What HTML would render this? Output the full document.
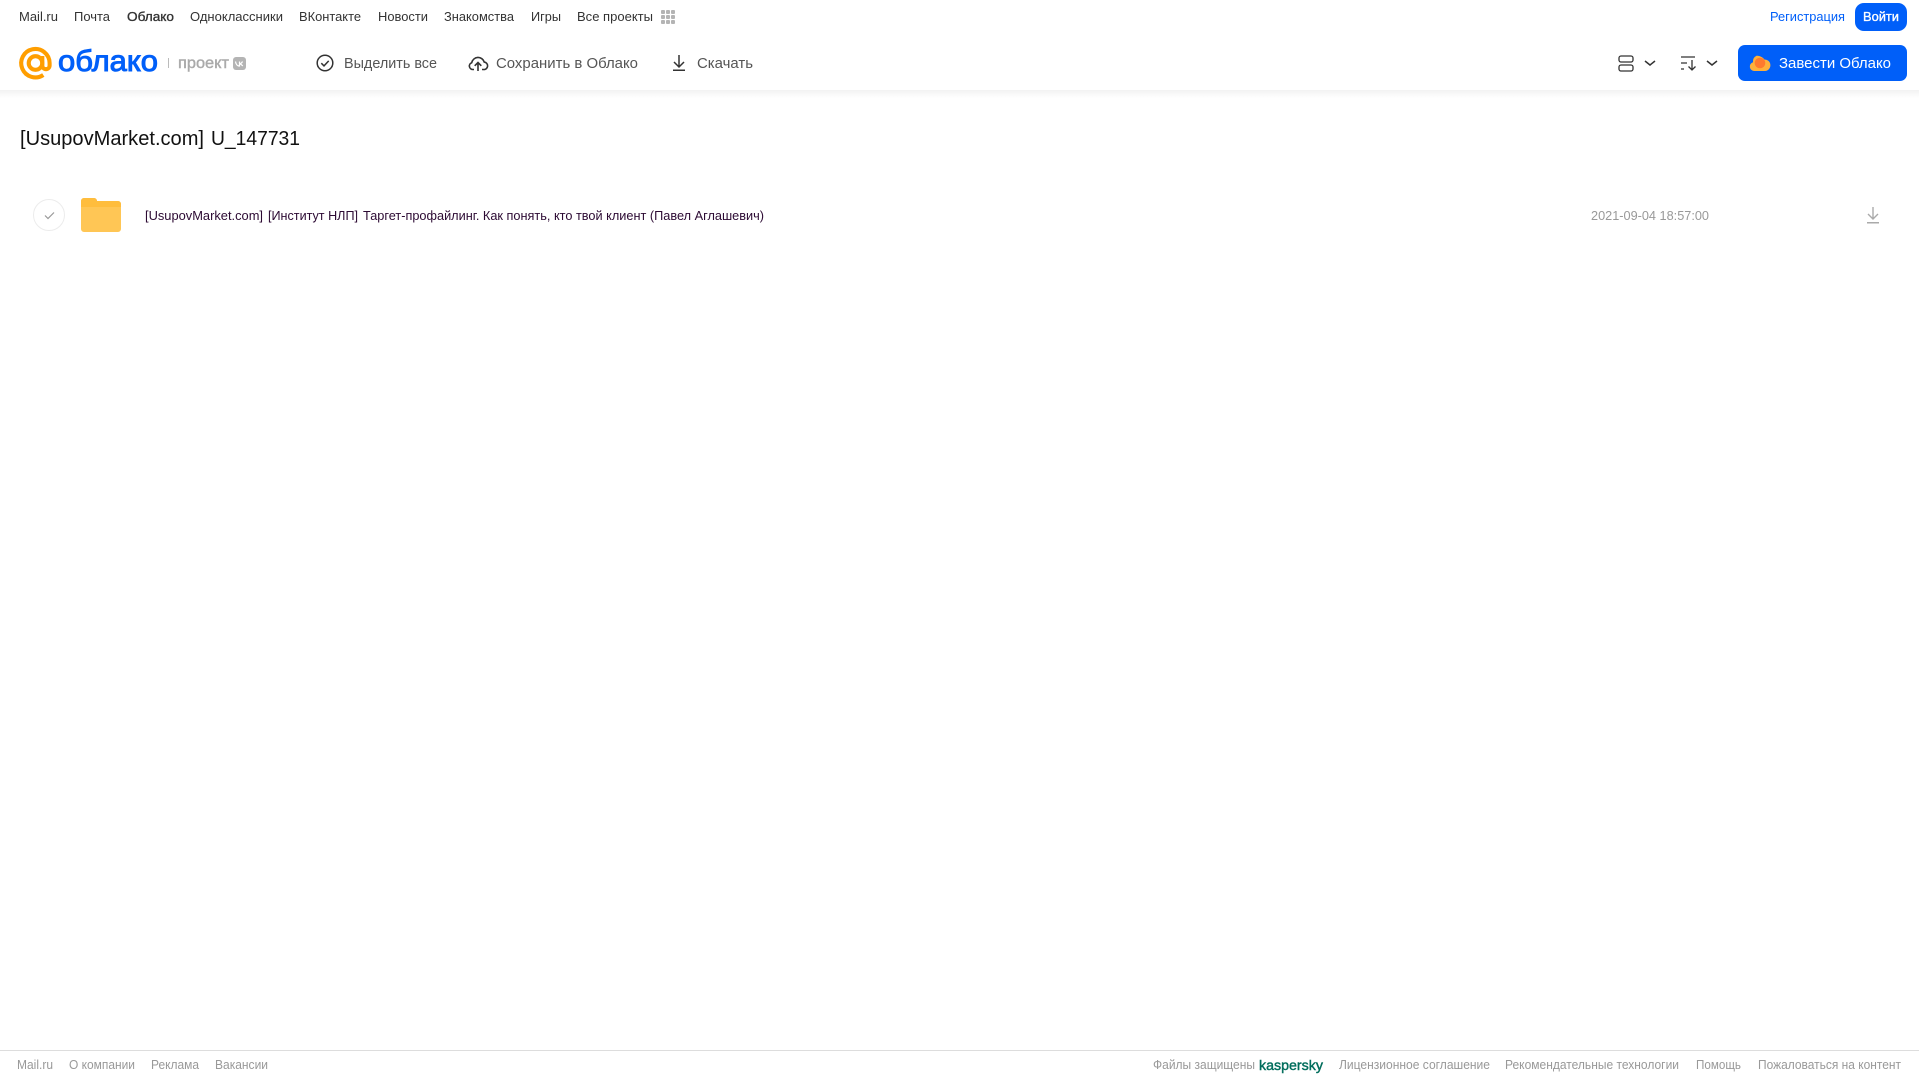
<!DOCTYPE html>
<html lang="ru">
<head>
<meta charset="utf-8">
<title>Облако</title>
<style>
html,body{margin:0;padding:0;background:#fff;width:1919px;height:1079px;overflow:hidden}
svg{display:block;position:absolute;left:0;top:0}
text{font-family:"Liberation Sans","DejaVu Sans",sans-serif;white-space:pre}
.n{font-size:13px;fill:#333}
.t{font-size:15px;fill:#555}
.f{font-size:12.5px;fill:#999}
.r{font-size:12.600px;fill:#2c0a33}
</style>
</head>
<body>
<svg width="1919" height="1079" viewBox="0 0 1919 1079" xmlns="http://www.w3.org/2000/svg">
<defs>
<linearGradient id="sh" x1="0" y1="0" x2="0" y2="1"><stop offset="0" stop-color="#000" stop-opacity=".05"/><stop offset="1" stop-color="#000" stop-opacity="0"/></linearGradient>
</defs>
<rect x="0" y="90" width="1919" height="8" fill="url(#sh)"/>

<!-- top nav -->
<text class="n" x="19" y="21" textLength="39" lengthAdjust="spacingAndGlyphs">Mail.ru</text>
<text class="n" x="74" y="21" textLength="36" lengthAdjust="spacingAndGlyphs">Почта</text>
<text class="n" x="127" y="21" textLength="47" lengthAdjust="spacingAndGlyphs" stroke="#333" stroke-width=".35">Облако</text>
<text class="n" x="190" y="21" textLength="93" lengthAdjust="spacingAndGlyphs">Одноклассники</text>
<text class="n" x="299" y="21" textLength="62" lengthAdjust="spacingAndGlyphs">ВКонтакте</text>
<text class="n" x="378" y="21" textLength="50" lengthAdjust="spacingAndGlyphs">Новости</text>
<text class="n" x="444" y="21" textLength="70" lengthAdjust="spacingAndGlyphs">Знакомства</text>
<text class="n" x="531" y="21" textLength="30" lengthAdjust="spacingAndGlyphs">Игры</text>
<text class="n" x="577" y="21" textLength="76" lengthAdjust="spacingAndGlyphs">Все проекты</text>
<g fill="#b4b4b4">
<rect x="661" y="10" width="4" height="4" rx="1"/><rect x="666" y="10" width="4" height="4" rx="1"/><rect x="671" y="10" width="4" height="4" rx="1"/>
<rect x="661" y="15" width="4" height="4" rx="1"/><rect x="666" y="15" width="4" height="4" rx="1"/><rect x="671" y="15" width="4" height="4" rx="1"/>
<rect x="661" y="20" width="4" height="4" rx="1"/><rect x="666" y="20" width="4" height="4" rx="1"/><rect x="671" y="20" width="4" height="4" rx="1"/>
</g>
<text x="1770" y="21" font-size="13" fill="#005ff9" textLength="75" lengthAdjust="spacingAndGlyphs">Регистрация</text>
<rect x="1855" y="3" width="52" height="28" rx="9" fill="#005ff9"/>
<text x="1863" y="21" font-size="13" stroke="#fff" stroke-width=".35" fill="#fff" textLength="36" lengthAdjust="spacingAndGlyphs">Войти</text>

<!-- logo -->
<g fill="none" stroke="#ff9e00" stroke-width="4.100">
<circle cx="35.500" cy="63" r="6.800"/>
<path d="M42.300 56v9.500a3.600 3.600 0 0 0 7.300 0V63a14.200 14.200 0 1 0-6.300 12"/>
</g>
<text x="58" y="71" font-size="30" stroke="#005ff9" stroke-width="1" fill="#005ff9" textLength="100" lengthAdjust="spacingAndGlyphs">облако</text>
<rect x="168" y="58" width="1" height="10" fill="#bbb"/>
<text x="178" y="68" font-size="15.500" stroke="#aaa" stroke-width=".4" fill="#aaa" textLength="51" lengthAdjust="spacingAndGlyphs">проект</text>
<rect x="233" y="57" width="13" height="13" rx="3" fill="#b4b4b4"/>
<path d="M235.500 61.500c.3 2.800 2 4.500 4 4.500v-4.500m0 2.300c1.500-.2 2.500-1.200 3-2.300m-3 2.300c1.500.2 2.500 1.200 3.300 2.200" fill="none" stroke="#fff" stroke-width="1.200"/>

<!-- toolbar -->
<circle cx="325" cy="63" r="7.800" fill="none" stroke="#333" stroke-width="1.500"/>
<path d="M321.300 63.200l2.700 2.700 4.700-5" fill="none" stroke="#333" stroke-width="1.500"/>
<text class="t" x="344" y="68" textLength="93" lengthAdjust="spacingAndGlyphs">Выделить все</text>

<path d="M474 69.500h-1a3.500 3.500 0 0 1-1.300-6.800 6.500 6.500 0 0 1 12.600-.6 3.700 3.700 0 0 1-.8 7.400h-1.500" fill="none" stroke="#333" stroke-width="1.600"/>
<path d="M478 71v-8.500m-3.300 3.300l3.300-3.300 3.300 3.300" fill="none" stroke="#333" stroke-width="1.600"/>
<text class="t" x="496" y="68" textLength="142" lengthAdjust="spacingAndGlyphs">Сохранить в Облако</text>

<path d="M679 55v12m-5-5l5 5 5-5" fill="none" stroke="#333" stroke-width="1.500"/>
<rect x="673" y="69.500" width="12" height="1.500" fill="#333"/>
<text class="t" x="697" y="68" textLength="56" lengthAdjust="spacingAndGlyphs">Скачать</text>

<!-- right controls -->
<g fill="none" stroke="#333" stroke-width="1.300">
<rect x="1619" y="56" width="14" height="6" rx="2"/>
<rect x="1619" y="65" width="14" height="6" rx="2"/>
<path d="M1645 61l5 4 5-4" stroke-width="1.500"/>
<path d="M1681 57h14M1681 63h6M1681 69h3"/>
<path d="M1692 60v10m-3.500-3.500l3.500 3.500 3.500-3.500"/>
<path d="M1707 61l5 4 5-4" stroke-width="1.500"/>
</g>
<rect x="1738" y="45" width="169" height="36" rx="7" fill="#005ff9"/>
<path d="M1754.500 71a4.500 4.500 0 0 1-1.500-8.800 6.500 6.500 0 0 1 3.500-6.400 6.500 6.500 0 0 1 5 1.200 5 5 0 0 1 2.800 2.500 5.400 5.400 0 0 1 .7 11.500z" fill="#ffb03a"/>
<circle cx="1760" cy="63" r="5.300" fill="#ff7a2e"/>
<text x="1779" y="68" font-size="15" fill="#fff" textLength="112" lengthAdjust="spacingAndGlyphs">Завести Облако</text>

<!-- title -->
<text x="20" y="145" font-size="20" fill="#111" textLength="184" lengthAdjust="spacingAndGlyphs">[UsupovMarket.com]</text>
<text x="211" y="145" font-size="20" fill="#111" textLength="89" lengthAdjust="spacingAndGlyphs">U_147731</text>

<!-- row -->
<circle cx="49" cy="215" r="15.500" fill="#fff" stroke="#ececec"/>
<path d="M45 215.500l3 3 6-6" fill="none" stroke="#999" stroke-width="1.200"/>
<path d="M84 198h10a3 3 0 0 1 3 3h21a3 3 0 0 1 3 3v25a3 3 0 0 1-3 3H84a3 3 0 0 1-3-3v-28a3 3 0 0 1 3-3z" fill="#ffc655"/>
<path d="M81 207h40v-3a3 3 0 0 0-3-3H97a3 3 0 0 0-3-3H84a3 3 0 0 0-3 3z" fill="#ffbd3d"/>
<text class="r" x="145" y="220" textLength="118" lengthAdjust="spacingAndGlyphs">[UsupovMarket.com]</text>
<text class="r" x="268" y="220" textLength="90" lengthAdjust="spacingAndGlyphs">[Институт НЛП]</text>
<text class="r" x="363" y="220" textLength="401" lengthAdjust="spacingAndGlyphs">Таргет-профайлинг. Как понять, кто твой клиент (Павел Аглашевич)</text>
<text x="1591" y="220" font-size="12.600" fill="#999" textLength="118" lengthAdjust="spacingAndGlyphs">2021-09-04 18:57:00</text>
<path d="M1873 207v12m-5-5l5 5 5-5" fill="none" stroke="#aaa" stroke-width="1.400"/>
<rect x="1867" y="222" width="12" height="1.500" fill="#aaa"/>

<!-- footer -->
<rect x="0" y="1050" width="1919" height="1" fill="#ddd"/>
<text class="f" x="17" y="1069" textLength="36" lengthAdjust="spacingAndGlyphs">Mail.ru</text>
<text class="f" x="69" y="1069" textLength="66" lengthAdjust="spacingAndGlyphs">О компании</text>
<text class="f" x="151" y="1069" textLength="48" lengthAdjust="spacingAndGlyphs">Реклама</text>
<text class="f" x="215" y="1069" textLength="53" lengthAdjust="spacingAndGlyphs">Вакансии</text>
<text class="f" x="1153" y="1069" textLength="102" lengthAdjust="spacingAndGlyphs">Файлы защищены</text>
<text x="1259" y="1070" font-size="13.500" stroke="#006d5c" stroke-width=".4" fill="#006d5c" textLength="64" lengthAdjust="spacingAndGlyphs">kaspersky</text>
<text class="f" x="1339" y="1069" textLength="151" lengthAdjust="spacingAndGlyphs">Лицензионное соглашение</text>
<text class="f" x="1505" y="1069" textLength="174" lengthAdjust="spacingAndGlyphs">Рекомендательные технологии</text>
<text class="f" x="1696" y="1069" textLength="45" lengthAdjust="spacingAndGlyphs">Помощь</text>
<text class="f" x="1758" y="1069" textLength="143" lengthAdjust="spacingAndGlyphs">Пожаловаться на контент</text>
</svg>
</body>
</html>
